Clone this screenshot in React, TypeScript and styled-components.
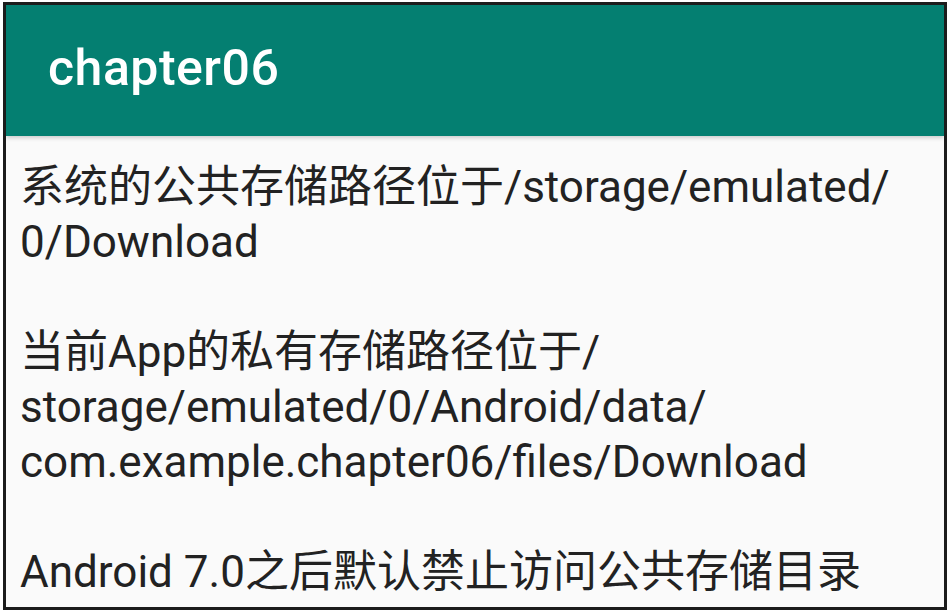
import React, { FC } from "react";
import styled, { createGlobalStyle } from "styled-components";

const MAIN_COLOR = "#047f71";

const paragraphs: string[][] = [
  ["系统的公共存储路径位于/storage/emulated/", "0/Download"],
  [
    "当前App的私有存储路径位于/",
    "storage/emulated/0/Android/data/",
    "com.example.chapter06/files/Download",
  ],
  ["Android 7.0之后默认禁止访问公共存储目录"],
];

const App: FC = () => {
  return (
    <>
      <GlobalStyle />
      <Frame>
        <AppBar>
          <Title>chapter06</Title>
        </AppBar>
        <Content>
          {paragraphs.map((lines, i) => (
            <Paragraph key={i}>
              {lines.map((line) => (
                <Line key={line}>{line}</Line>
              ))}
            </Paragraph>
          ))}
        </Content>
      </Frame>
    </>
  );
};

const GlobalStyle = createGlobalStyle`
  html, body {
    margin: 0;
    padding: 0;
    background: #ffffff;
  }
  body {
    font-family: Roboto, "Noto Sans CJK SC", sans-serif;
  }
`;

const Frame = styled.div`
  box-sizing: border-box;
  width: 944px;
  height: 608px;
  margin: 2px 0 0 3px;
  border: 3px solid #1c1c1c;
  background: #fafafa;
  display: flex;
  flex-direction: column;
  overflow: hidden;
`;

const AppBar = styled.header`
  height: 131px;
  flex-shrink: 0;
  background: ${MAIN_COLOR};
  display: flex;
  align-items: center;
  padding-left: 42px;
  box-shadow: 0 2px 4px rgba(0, 0, 0, 0.18);
`;

const Title = styled.h1`
  margin: 0;
  margin-top: -6px;
  color: #ffffff;
  font-size: 50px;
  font-weight: 500;
  letter-spacing: 0.5px;
`;

const Content = styled.main`
  padding: 24px 0 0 14px;
  display: flex;
  flex-direction: column;
  gap: 55px;
`;

const Paragraph = styled.div`
  display: flex;
  flex-direction: column;
`;

const Line = styled.div`
  font-size: 44px;
  line-height: 55px;
  height: 55px;
  color: #222222;
  white-space: nowrap;
`;

export default App;
